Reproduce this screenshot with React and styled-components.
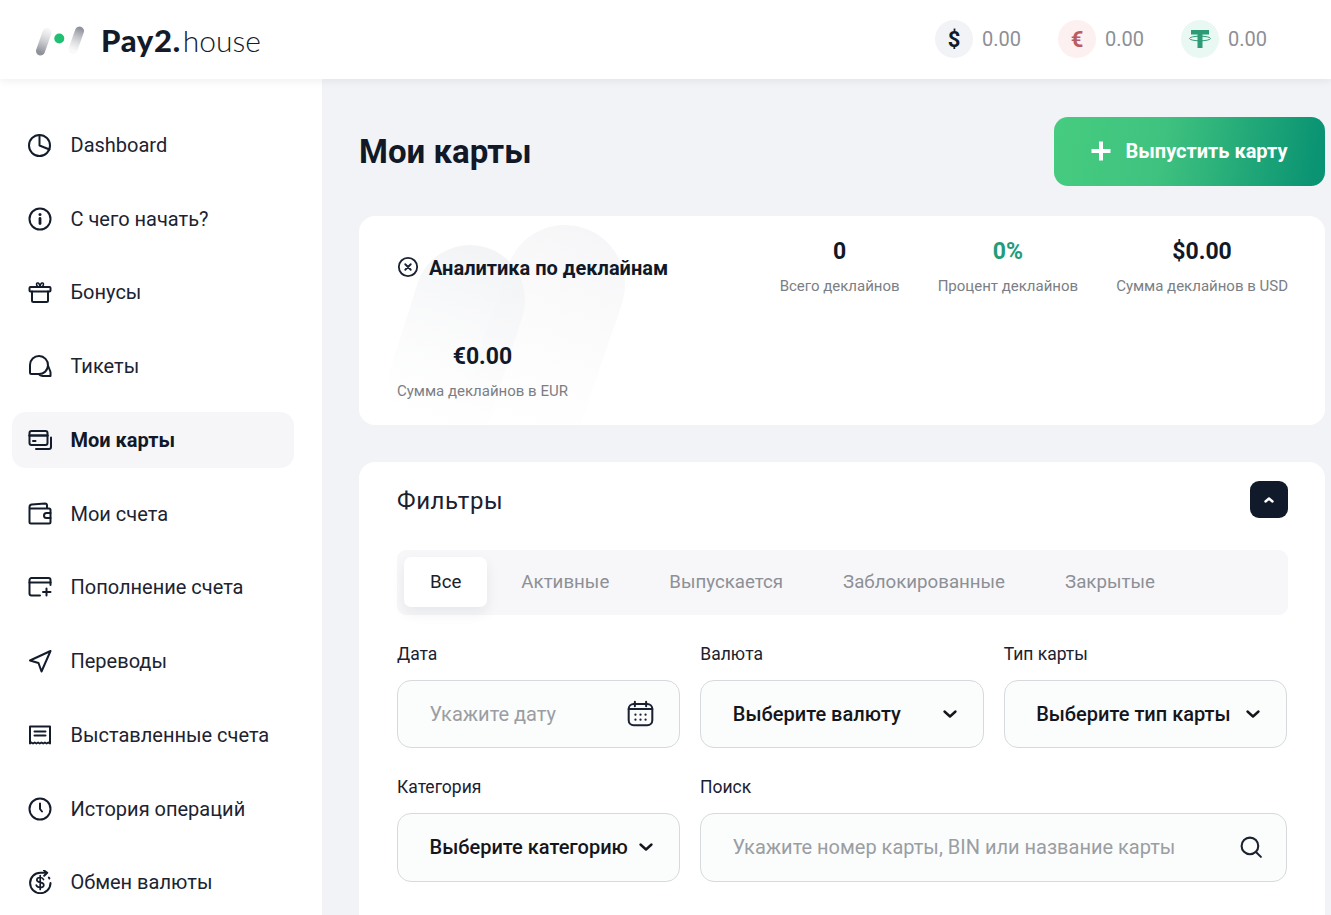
import React from "react";
import styled, { createGlobalStyle } from "styled-components";

const Global = createGlobalStyle`
  html, body { margin: 0; padding: 0; height: 915px; overflow: hidden; background: #f2f3f7; }
  * { box-sizing: border-box; }
  body { font-family: Roboto, "Liberation Sans", sans-serif; color: #111827; }
`;

const Page = styled.div`
  width: 1331px;
  height: 915px;
  display: flex;
  flex-direction: column;
  overflow: hidden;
`;
const Header = styled.header`
  height: 79px;
  flex: none;
  background: #fff;
  display: flex;
  align-items: center;
  justify-content: space-between;
  padding: 0 64px 0 36px;
  box-shadow: 0 2px 8px rgba(17, 24, 39, 0.07);
  position: relative;
  z-index: 2;
`;
const Logo = styled.div`
  display: flex;
  align-items: center;
  gap: 17px;
`;
const LogoText = styled.div`
  font-family: Lato, sans-serif;
  font-size: 31px;
  line-height: 36px;
  color: #131b2a;
  display: flex;
  margin-left: -1px;
  strong { font-weight: 900; letter-spacing: 0.7px; }
  span { font-weight: 300; margin-left: 2px; font-size: 30px; }
`;
const Balances = styled.div`
  display: flex;
  gap: 37px;
  margin-bottom: 2px;
`;
const Balance = styled.div`
  display: flex;
  align-items: center;
  gap: 9px;
  font-size: 20px;
  color: #8d8f96;
`;
const Coin = styled.div`
  width: 38px;
  height: 38px;
  border-radius: 50%;
  background: ${(p) => p.$bg};
  color: ${(p) => p.$fg};
  display: flex;
  align-items: center;
  justify-content: center;
  padding-top: 2px;
  font-size: 22px;
  font-weight: 700;
`;
const Body = styled.div`
  flex: 1;
  display: flex;
  min-height: 0;
`;
const Sidebar = styled.nav`
  width: 322px;
  flex: none;
  background: #fff;
  padding: 37.75px 28px 0 12px;
  display: flex;
  flex-direction: column;
  gap: 17.75px;
`;
const NavItem = styled.div`
  height: 56px;
  flex: none;
  display: flex;
  align-items: center;
  gap: 19px;
  padding-left: 15.5px;
  border-radius: 14px;
  font-size: 20px;
  font-weight: ${(p) => (p.$active ? 700 : 400)};
  background: ${(p) => (p.$active ? "#f6f6f9" : "transparent")};
  color: ${(p) => (p.$active ? "#111827" : "#1c2331")};
`;
const Main = styled.main`
  flex: 1;
  padding: 38px 6px 0 37px;
  display: flex;
  flex-direction: column;
  min-width: 0;
`;
const TitleRow = styled.div`
  height: 69px;
  flex: none;
  display: flex;
  align-items: center;
  justify-content: space-between;
  margin-bottom: 30px;
`;
const PageTitle = styled.h1`
  margin: 0;
  font-size: 33px;
  font-weight: 700;
  color: #111827;
`;
const IssueButton = styled.button`
  width: 271px;
  height: 69px;
  border: 0;
  border-radius: 14px;
  padding: 0 2px 1px 0;
  background: linear-gradient(100deg, #46cc80 0%, #3fc27f 40%, #0b9473 95%);
  color: #fff;
  font-family: inherit;
  font-size: 20px;
  font-weight: 700;
  display: flex;
  align-items: center;
  justify-content: center;
  gap: 14px;
`;
const AnalyticsCard = styled.section`
  position: relative;
  overflow: hidden;
  flex: none;
  height: 209px;
  background: #fff;
  border-radius: 16px;
  padding: 21px 37px 0 38px;
  display: flex;
  flex-wrap: wrap;
  align-content: flex-start;
  column-gap: 38px;
  row-gap: 44px;
  margin-bottom: 37px;
`;
const Decor = styled.svg`
  position: absolute;
  left: 30px;
  top: 0;
`;
const AnalyticsTitle = styled.div`
  position: relative;
  flex: 1;
  display: flex;
  align-items: flex-start;
  gap: 10px;
  padding-top: 19px;
  font-size: 20px;
  font-weight: 700;
  white-space: nowrap;
`;
const Stat = styled.div`
  position: relative;
  height: 61px;
  padding: 1px 0;
  display: flex;
  flex-direction: column;
  align-items: center;
  justify-content: space-between;
  text-align: center;
`;
const StatValue = styled.div`
  font-size: 23px;
  line-height: 28px;
  font-weight: 700;
  color: ${(p) => p.$color || "#111827"};
`;
const StatLabel = styled.div`
  font-size: 15px;
  line-height: 22px;
  color: #7b7e85;
  white-space: nowrap;
`;
const FilterCard = styled.section`
  flex: 1;
  background: #fff;
  border-radius: 16px 16px 0 0;
  padding: 19px 37px 0 38px;
`;
const FilterHead = styled.div`
  display: flex;
  align-items: center;
  justify-content: space-between;
  height: 37px;
  margin-bottom: 32px;
`;
const FilterTitle = styled.h2`
  margin: 2px 0 0;
  font-size: 24px;
  font-weight: 400;
  letter-spacing: 0.6px;
  color: #1a2130;
`;
const Toggle = styled.button`
  width: 38px;
  height: 37px;
  border: 0;
  padding: 0;
  border-radius: 9px;
  background: #111a2a;
  display: flex;
  align-items: center;
  justify-content: center;
`;
const Tabs = styled.div`
  height: 65px;
  background: #f7f7f9;
  border-radius: 9px;
  padding: 7px;
  display: flex;
  gap: 8px;
  margin-bottom: 25.5px;
`;
const Tab = styled.div`
  height: 50px;
  padding: 0 26px 1px;
  display: flex;
  align-items: center;
  border-radius: 7px;
  font-size: 18.7px;
  color: ${(p) => (p.$active ? "#1a2130" : "#8d9096")};
  background: ${(p) => (p.$active ? "#fff" : "transparent")};
  box-shadow: ${(p) => (p.$active ? "0 6px 14px rgba(17,24,39,.07)" : "none")};
`;
const Grid = styled.div`
  display: grid;
  grid-template-columns: ${(p) => p.$cols};
  column-gap: 20px;
  margin-bottom: 26px;
  width: 890px;
`;
const Field = styled.div`
  display: flex;
  flex-direction: column;
  gap: 13px;
  min-width: 0;
`;
const Label = styled.label`
  font-size: 17.5px;
  line-height: 26px;
  color: #1a2130;
`;
const Control = styled.div`
  height: 68.5px;
  border: 1px solid #d6dadc;
  border-radius: 14px;
  background: #fbfcfc;
  display: flex;
  align-items: center;
  justify-content: space-between;
  padding: 0 ${(p) => p.$pr || 24}px 0 31.5px;
  font-size: 20px;
  white-space: nowrap;
  font-weight: ${(p) => (p.$select ? 500 : 400)};
  color: ${(p) => (p.$select ? "#14161c" : "#9a9ea3")};
`;

const Ic = ({ children, size = 24, sw = 2, color = "#111827" }) => (
  <svg width={size} height={size} viewBox="0 0 24 24" fill="none" stroke={color} strokeWidth={sw} strokeLinecap="round" strokeLinejoin="round" style={{ flex: "none" }}>
    {children}
  </svg>
);

const nav = [
  ["Dashboard", <><circle cx="11.5" cy="12.5" r="10.5" /><path d="M11.5 2v10.5l10 4" /></>],
  ["С чего начать?", <><circle cx="12" cy="12" r="10.5" /><path d="M12 11.5v5" strokeWidth="2.8" /><path d="M12 7.4v.2" strokeWidth="3" /></>],
  ["Бонусы", <><rect x="1.5" y="7" width="21" height="4.5" rx="1" /><path d="M4 11.5V20.5a1.5 1.5 0 0 0 1.5 1.500h13a1.500 1.500 0 0 0 1.500-1.500V11.500" /><path d="M12 7C10.500 7 8.500 6.300 8.500 4.300 8.500 2.300 11.500 2 12 7zM12 7c1.500 0 3.500-.7 3.500-2.700C15.500 2.300 12.500 2 12 7z" strokeWidth="1.500" /></>],
  ["Тикеты", <><path d="M10.500 20H3.500A1.500 1.500 0 0 1 2 18.500V11a9 9 0 1 1 8.500 9c4.500.5 9.500-3 9.500-9" /><path d="M20 11.500l2.500 6.500v4h-8a5 5 0 0 1-4-2" /></>],
  ["Мои карты", <><rect x="1.500" y="3" width="18" height="14" rx="2" /><path d="M1.500 7.500h18" strokeWidth="2.400" /><path d="M5 13h2.500" /><path d="M23 9.500V19a2 2 0 0 1-2 2H8" /></>],
  ["Мои счета", <><path d="M3 6.500h18a1.500 1.500 0 0 1 1.500 1.500v12a1.500 1.500 0 0 1-1.500 1.500H3A1.500 1.500 0 0 1 1.500 20V5A2.500 2.500 0 0 1 3.800 2.600L17 1.500a2 2 0 0 1 2 2v3" /><path d="M22.500 11h-4a2.500 2.500 0 0 0 0 5h4" /></>],
  ["Пополнение счета", <><path d="M12 20.500H3.500a2 2 0 0 1-2-2V5a2 2 0 0 1 2-2h17a2 2 0 0 1 2 2v5" /><path d="M1.500 7.500h21" strokeWidth="2.200" /><path d="M18.500 13.500v7M15 17h7.500" /></>],
  ["Переводы", <path d="M22.500 2L2 11.500l8.500 2.500 3 8.500z" />],
  ["Выставленные счета", <><path d="M2 3.500h20v17l-1.700-1-1.700 1-1.700-1-1.700 1-1.700-1-1.700 1-1.700-1-1.700 1-1.700-1-1.700 1-1.700-1L2 20.500z" /><path d="M6.500 8.500h11M6.500 12.500h11" /></>],
  ["История операций", <><circle cx="12" cy="12" r="10.500" /><path d="M12 6.500V12l2 2.500" /></>],
  ["Обмен валюты", <><path d="M22.500 13A10.200 10.200 0 1 1 12.300 2.800h6" /><path d="M16 .5l3.200 2.300-3 3" /><path d="M20.800 7.500l.6.9" /><path d="M15.500 9.500c-.5-1.400-1.900-2-3.300-2-1.900 0-3.400 1-3.400 2.500 0 3.300 7 1.500 7 5 0 1.500-1.500 2.500-3.800 2.500-1.900 0-3.300-.8-3.800-2.400M12.200 5.500v14" strokeWidth="1.700" /></>],
];

const Chevron = ({ up }) => (
  <svg width="18" height="18" viewBox="0 0 18 18" fill="none" stroke={up ? "#fff" : "#14161c"} strokeWidth="2.400" strokeLinecap="round" strokeLinejoin="round" style={{ flex: "none" }}>
    <path d={up ? "M5.500 10.500L9 7.500l3.500 3" : "M3.500 6.500L9 11.500l5.500-5"} />
  </svg>
);

export default function App() {
  return (
    <Page>
      <Global />
      <Header>
        <Logo>
          <svg width="49" height="32" viewBox="0 0 49 32" fill="none">
            <defs>
              <linearGradient id="pl" gradientUnits="userSpaceOnUse" x1="13" y1="4" x2="4" y2="28">
                <stop offset="0" stopColor="#c6c8cd" stopOpacity="0.1" />
                <stop offset="1" stopColor="#8f929b" />
              </linearGradient>
              <linearGradient id="pr" gradientUnits="userSpaceOnUse" x1="43" y1="4" x2="35" y2="26">
                <stop offset="0" stopColor="#8f929b" />
                <stop offset="1" stopColor="#c6c8cd" stopOpacity="0.1" />
              </linearGradient>
            </defs>
            <path d="M4.500 27L11 8.500" stroke="url(#pl)" strokeWidth="9" strokeLinecap="round" />
            <path d="M43.500 7L37 25.500" stroke="url(#pr)" strokeWidth="9" strokeLinecap="round" />
            <circle cx="23.300" cy="14.500" r="5" fill="#1fc071" />
          </svg>
          <LogoText><strong>Pay2.</strong><span>house</span></LogoText>
        </Logo>
        <Balances>
          <Balance>
            <Coin $bg="#f2f3f6" $fg="#111a2a">$</Coin>
            <span>0.00</span>
          </Balance>
          <Balance>
            <Coin $bg="#fdf0f0" $fg="#b85c62">€</Coin>
            <span>0.00</span>
          </Balance>
          <Balance>
            <Coin $bg="#e9f8f2" $fg="#2d9c76">
              <svg width="24" height="20" viewBox="0 0 24 20" fill="none">
                <path d="M3 0h18v4.500h-6.500V18h-5V4.500H3z" fill="#2d9c76" />
                <ellipse cx="12" cy="8.500" rx="10.500" ry="2.300" stroke="#2d9c76" strokeWidth="1" />
              </svg>
            </Coin>
            <span>0.00</span>
          </Balance>
        </Balances>
      </Header>
      <Body>
        <Sidebar>
          {nav.map(([label, icon]) => (
            <NavItem key={label} $active={label === "Мои карты"}>
              <Ic size={24} sw={2} color="#141c2b">{icon}</Ic>
              <span>{label}</span>
            </NavItem>
          ))}
        </Sidebar>
        <Main>
          <TitleRow>
            <PageTitle>Мои карты</PageTitle>
            <IssueButton>
              <svg width="22" height="22" viewBox="0 0 22 22" stroke="#fff" strokeWidth="4" fill="none"><path d="M11 1.500v19M1.500 11h19" /></svg>
              Выпустить карту
            </IssueButton>
          </TitleRow>
          <AnalyticsCard>
            <Decor width="270" height="209" viewBox="0 0 270 209" fill="none">
              <defs>
                <linearGradient id="d1" gradientUnits="userSpaceOnUse" x1="100" y1="40" x2="40" y2="209">
                  <stop offset="0" stopColor="#f3f4f6" />
                  <stop offset="1" stopColor="#f8f9fa" stopOpacity="0" />
                </linearGradient>
                <linearGradient id="d2" gradientUnits="userSpaceOnUse" x1="190" y1="10" x2="110" y2="209">
                  <stop offset="0" stopColor="#f6f6f8" />
                  <stop offset="1" stopColor="#fafafb" stopOpacity="0" />
                </linearGradient>
              </defs>
              <path d="M176 69L100 290" stroke="url(#d2)" strokeWidth="120" strokeLinecap="round" />
              <path d="M81 84L25 260" stroke="url(#d1)" strokeWidth="110" strokeLinecap="round" />
            </Decor>
            <AnalyticsTitle>
              <Ic size={22} sw={2} color="#1a2130">
                <circle cx="12" cy="12" r="10" />
                <path d="M9 9l6 6M15 9l-6 6" />
              </Ic>
              Аналитика по деклайнам
            </AnalyticsTitle>
            <Stat><StatValue>0</StatValue><StatLabel>Всего деклайнов</StatLabel></Stat>
            <Stat><StatValue $color="#1f9c7c">0%</StatValue><StatLabel>Процент деклайнов</StatLabel></Stat>
            <Stat><StatValue>$0.00</StatValue><StatLabel>Сумма деклайнов в USD</StatLabel></Stat>
            <Stat><StatValue>€0.00</StatValue><StatLabel>Сумма деклайнов в EUR</StatLabel></Stat>
          </AnalyticsCard>
          <FilterCard>
            <FilterHead>
              <FilterTitle>Фильтры</FilterTitle>
              <Toggle><Chevron up /></Toggle>
            </FilterHead>
            <Tabs>
              <Tab $active>Все</Tab>
              <Tab>Активные</Tab>
              <Tab>Выпускается</Tab>
              <Tab>Заблокированные</Tab>
              <Tab>Закрытые</Tab>
            </Tabs>
            <Grid $cols="1fr 1fr 1fr">
              <Field>
                <Label>Дата</Label>
                <Control $pr={25}>
                  Укажите дату
                  <Ic size={27} sw={1.800} color="#1a2130">
                    <rect x="1.500" y="3.500" width="21" height="19" rx="4.500" />
                    <path d="M7 1.500v4M17 1.500v4M1.500 8h21" />
                    <path d="M7.500 13h.01M12 13h.01M16.500 13h.01M7.500 17.500h.01M12 17.500h.01M16.500 17.500h.01" strokeWidth="2" />
                  </Ic>
                </Control>
              </Field>
              <Field>
                <Label>Валюта</Label>
                <Control $select>Выберите валюту <Chevron /></Control>
              </Field>
              <Field>
                <Label>Тип карты</Label>
                <Control $select $pr={24}>Выберите тип карты <Chevron /></Control>
              </Field>
            </Grid>
            <Grid $cols="283px 1fr">
              <Field>
                <Label>Категория</Label>
                <Control $select $pr={24}>Выберите категорию <Chevron /></Control>
              </Field>
              <Field>
                <Label>Поиск</Label>
                <Control $pr={22}>
                  Укажите номер карты, BIN или название карты
                  <Ic size={25} sw={2} color="#1a2130">
                    <circle cx="10.500" cy="10.500" r="8" />
                    <path d="M16.500 16.500L21 21" />
                  </Ic>
                </Control>
              </Field>
            </Grid>
          </FilterCard>
        </Main>
      </Body>
    </Page>
  );
}
